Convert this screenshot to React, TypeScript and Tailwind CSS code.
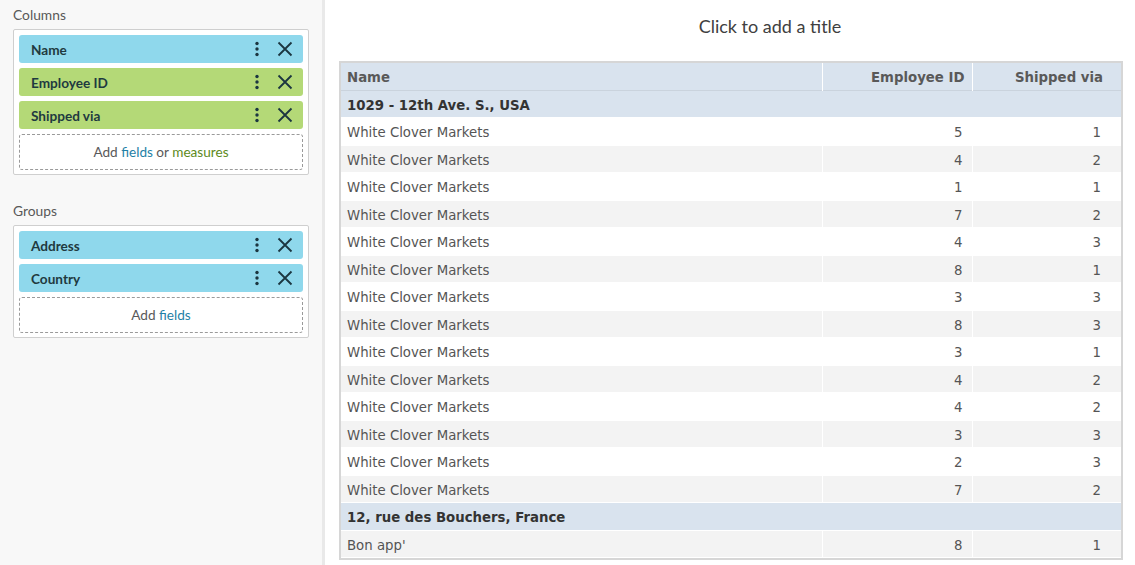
import React from 'react';

type Chip = { label: string; tone: 'dim' | 'measure' };

const columns: Chip[] = [
  { label: 'Name', tone: 'dim' },
  { label: 'Employee ID', tone: 'measure' },
  { label: 'Shipped via', tone: 'measure' },
];

const groups: Chip[] = [
  { label: 'Address', tone: 'dim' },
  { label: 'Country', tone: 'dim' },
];

type Row =
  | { kind: 'group'; label: string }
  | { kind: 'data'; name: string; emp: number; ship: number };

const rows: Row[] = [
  { kind: 'group', label: '1029 - 12th Ave. S., USA' },
  { kind: 'data', name: 'White Clover Markets', emp: 5, ship: 1 },
  { kind: 'data', name: 'White Clover Markets', emp: 4, ship: 2 },
  { kind: 'data', name: 'White Clover Markets', emp: 1, ship: 1 },
  { kind: 'data', name: 'White Clover Markets', emp: 7, ship: 2 },
  { kind: 'data', name: 'White Clover Markets', emp: 4, ship: 3 },
  { kind: 'data', name: 'White Clover Markets', emp: 8, ship: 1 },
  { kind: 'data', name: 'White Clover Markets', emp: 3, ship: 3 },
  { kind: 'data', name: 'White Clover Markets', emp: 8, ship: 3 },
  { kind: 'data', name: 'White Clover Markets', emp: 3, ship: 1 },
  { kind: 'data', name: 'White Clover Markets', emp: 4, ship: 2 },
  { kind: 'data', name: 'White Clover Markets', emp: 4, ship: 2 },
  { kind: 'data', name: 'White Clover Markets', emp: 3, ship: 3 },
  { kind: 'data', name: 'White Clover Markets', emp: 2, ship: 3 },
  { kind: 'data', name: 'White Clover Markets', emp: 7, ship: 2 },
  { kind: 'group', label: '12, rue des Bouchers, France' },
  { kind: 'data', name: "Bon app'", emp: 8, ship: 1 },
];

const MoreIcon = () => (
  <svg width="6" height="16" viewBox="0 0 6 16" className="text-[#1b3640]">
    <circle cx="3" cy="2.5" r="1.7" fill="currentColor" />
    <circle cx="3" cy="8" r="1.7" fill="currentColor" />
    <circle cx="3" cy="13.5" r="1.7" fill="currentColor" />
  </svg>
);

const CloseIcon = () => (
  <svg width="16" height="16" viewBox="0 0 16 16" className="text-[#1b3640]">
    <path d="M1.5 1.5 L14.5 14.5 M14.5 1.5 L1.5 14.5" stroke="currentColor" strokeWidth="1.8" fill="none" />
  </svg>
);

const FieldChip = ({ chip }: { chip: Chip }) => (
  <div
    className={`flex h-[28px] items-center rounded-[3px] pl-3 pr-[10px] ${
      chip.tone === 'dim' ? 'bg-[#8fd8ec]' : 'bg-[#b4d977]'
    }`}
  >
    <span className="flex-1 pt-[2px] text-[13.6px] font-bold text-[#1f3a40]">{chip.label}</span>
    <div className="flex items-center gap-[17px]">
      <MoreIcon />
      <CloseIcon />
    </div>
  </div>
);

const FieldBox = ({
  title,
  chips,
  children,
}: {
  title: string;
  chips: Chip[];
  children: React.ReactNode;
}) => (
  <div>
    <div className="h-[16px] text-[13.8px] leading-[16px] text-[#595959]">{title}</div>
    <div className="mt-[6px] flex flex-col gap-[5px] rounded-[2px] border border-[#cfcfcf] bg-white px-[5px] pt-[5px] pb-[4px]">
      {chips.map((c) => (
        <FieldChip key={c.label} chip={c} />
      ))}
      <div className="flex h-[36px] items-center justify-center rounded-[3px] border border-dashed border-[#9a9a9a] pt-[1px] text-[13.6px] text-[#595959]">
        {children}
      </div>
    </div>
  </div>
);

const App = () => {
  let stripe = 0;
  return (
    <div className="flex h-[565px] w-[1135px] overflow-hidden bg-white font-['Lato',sans-serif]">
      {/* field panel */}
      <aside className="w-[325px] shrink-0 border-r-[3px] border-[#e9e9e9] bg-[#f8f8f8] pl-[13px] pr-[13px] pt-[7px]">
        <FieldBox title="Columns" chips={columns}>
          <span>
            Add <span className="text-[#1f7fa6]">fields</span> or{' '}
            <span className="text-[#5d8a1c]">measures</span>
          </span>
        </FieldBox>
        <div className="mt-[28px]">
          <FieldBox title="Groups" chips={groups}>
            <span>
              Add <span className="text-[#1f7fa6]">fields</span>
            </span>
          </FieldBox>
        </div>
      </aside>

      {/* report */}
      <main className="flex-1 pl-[14px] pr-[12px]">
        <div className="flex h-[61px] items-start justify-center pt-[14px] pl-[78px]">
          <h1 className="text-[18px] leading-[24px] text-[#404040]">Click to add a title</h1>
        </div>
        <div className="border-2 border-[#d6d6d6] font-['DejaVu_Sans',Verdana,sans-serif] text-[13.3px]">
          <table className="w-full table-fixed border-collapse">
            <colgroup>
              <col />
              <col className="w-[150px]" />
              <col className="w-[149px]" />
            </colgroup>
            <thead>
              <tr className="h-[27px] border-b border-[#cad3dd] bg-[#d9e3ee] font-bold text-[#595959]">
                <th className="pt-[4px] pl-[6px] text-left">Name</th>
                <th className="border-l border-white pt-[4px] pr-[7px] text-right">Employee ID</th>
                <th className="border-l border-white pt-[4px] pr-[18px] text-right">Shipped via</th>
              </tr>
            </thead>
            <tbody>
              {rows.map((r, i) => {
                stripe += 1;
                if (r.kind === 'group') {
                  return (
                    <tr key={i} className="h-[27.5px] border-b border-white bg-[#d9e3ee] font-bold text-[#333333]">
                      <td colSpan={3} className="pt-[4px] pl-[6px]">
                        {r.label}
                      </td>
                    </tr>
                  );
                }
                const grey = stripe % 2 === 1;
                return (
                  <tr
                    key={i}
                    className={`h-[27.5px] border-b border-white text-[#555555] ${grey ? 'bg-[#f3f3f3]' : 'bg-white'}`}
                  >
                    <td className="pt-[4px] pl-[6px]">{r.name}</td>
                    <td className="border-l border-white pt-[4px] pr-[9px] text-right">{r.emp}</td>
                    <td className="border-l border-white pt-[4px] pr-[20px] text-right">{r.ship}</td>
                  </tr>
                );
              })}
            </tbody>
          </table>
        </div>
      </main>
    </div>
  );
};

export default App;
